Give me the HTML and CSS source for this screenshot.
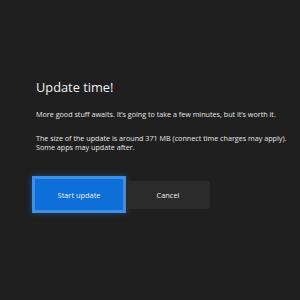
FILE: index.html
```html
<!DOCTYPE html>
<html>
<head>
<meta charset="utf-8">
<link rel="stylesheet" href="styles.css">
</head>
<body>
<div class="dialog">
  <h1 class="title">Update time!</h1>
  <p class="text">More good stuff awaits. It’s going to take a few minutes, but it’s worth it.</p>
  <p class="text">The size of the update is around 371 MB (connect time charges may apply).<br>Some apps may update after.</p>
  <div class="actions">
    <button class="btn btn-primary">Start update</button>
    <button class="btn btn-secondary">Cancel</button>
  </div>
</div>
</body>
</html>
```
FILE: styles.css
```css
html, body {
  margin: 0;
  height: 100%;
  background: #1f1f1f;
}
body {
  font-family: "Open Sans", "Noto Sans", sans-serif;
  color: #e8e8e8;
}
.dialog {
  padding: 77px 0 0 36px;
}
.title {
  margin: 0;
  font-size: 12.8px;
  font-weight: 400;
  line-height: 20px;
  color: #f0f0f0;
}
.text {
  margin: 0;
  font-size: 7.2px;
  line-height: 9px;
  color: #e6e6e6;
}
.title + .text {
  margin-top: 13px;
}
.text + .text {
  margin-top: 15px;
}
.actions {
  display: flex;
  align-items: center;
  margin: 24px 0 0 -4px;
}
.btn {
  font-family: inherit;
  font-size: 7.4px;
  color: #f0f0f0;
  border: none;
  padding: 0;
  cursor: pointer;
}
.btn-primary {
  width: 94px;
  height: 37px;
  background: #0f6fd8;
  border: 3px solid #3f8fe6;
  box-shadow: 0 0 6px rgba(40, 130, 240, 0.45);
}
.btn-secondary {
  width: 84px;
  height: 28px;
  background: #2b2b2b;
  border-radius: 0 2px 2px 0;
}
```
